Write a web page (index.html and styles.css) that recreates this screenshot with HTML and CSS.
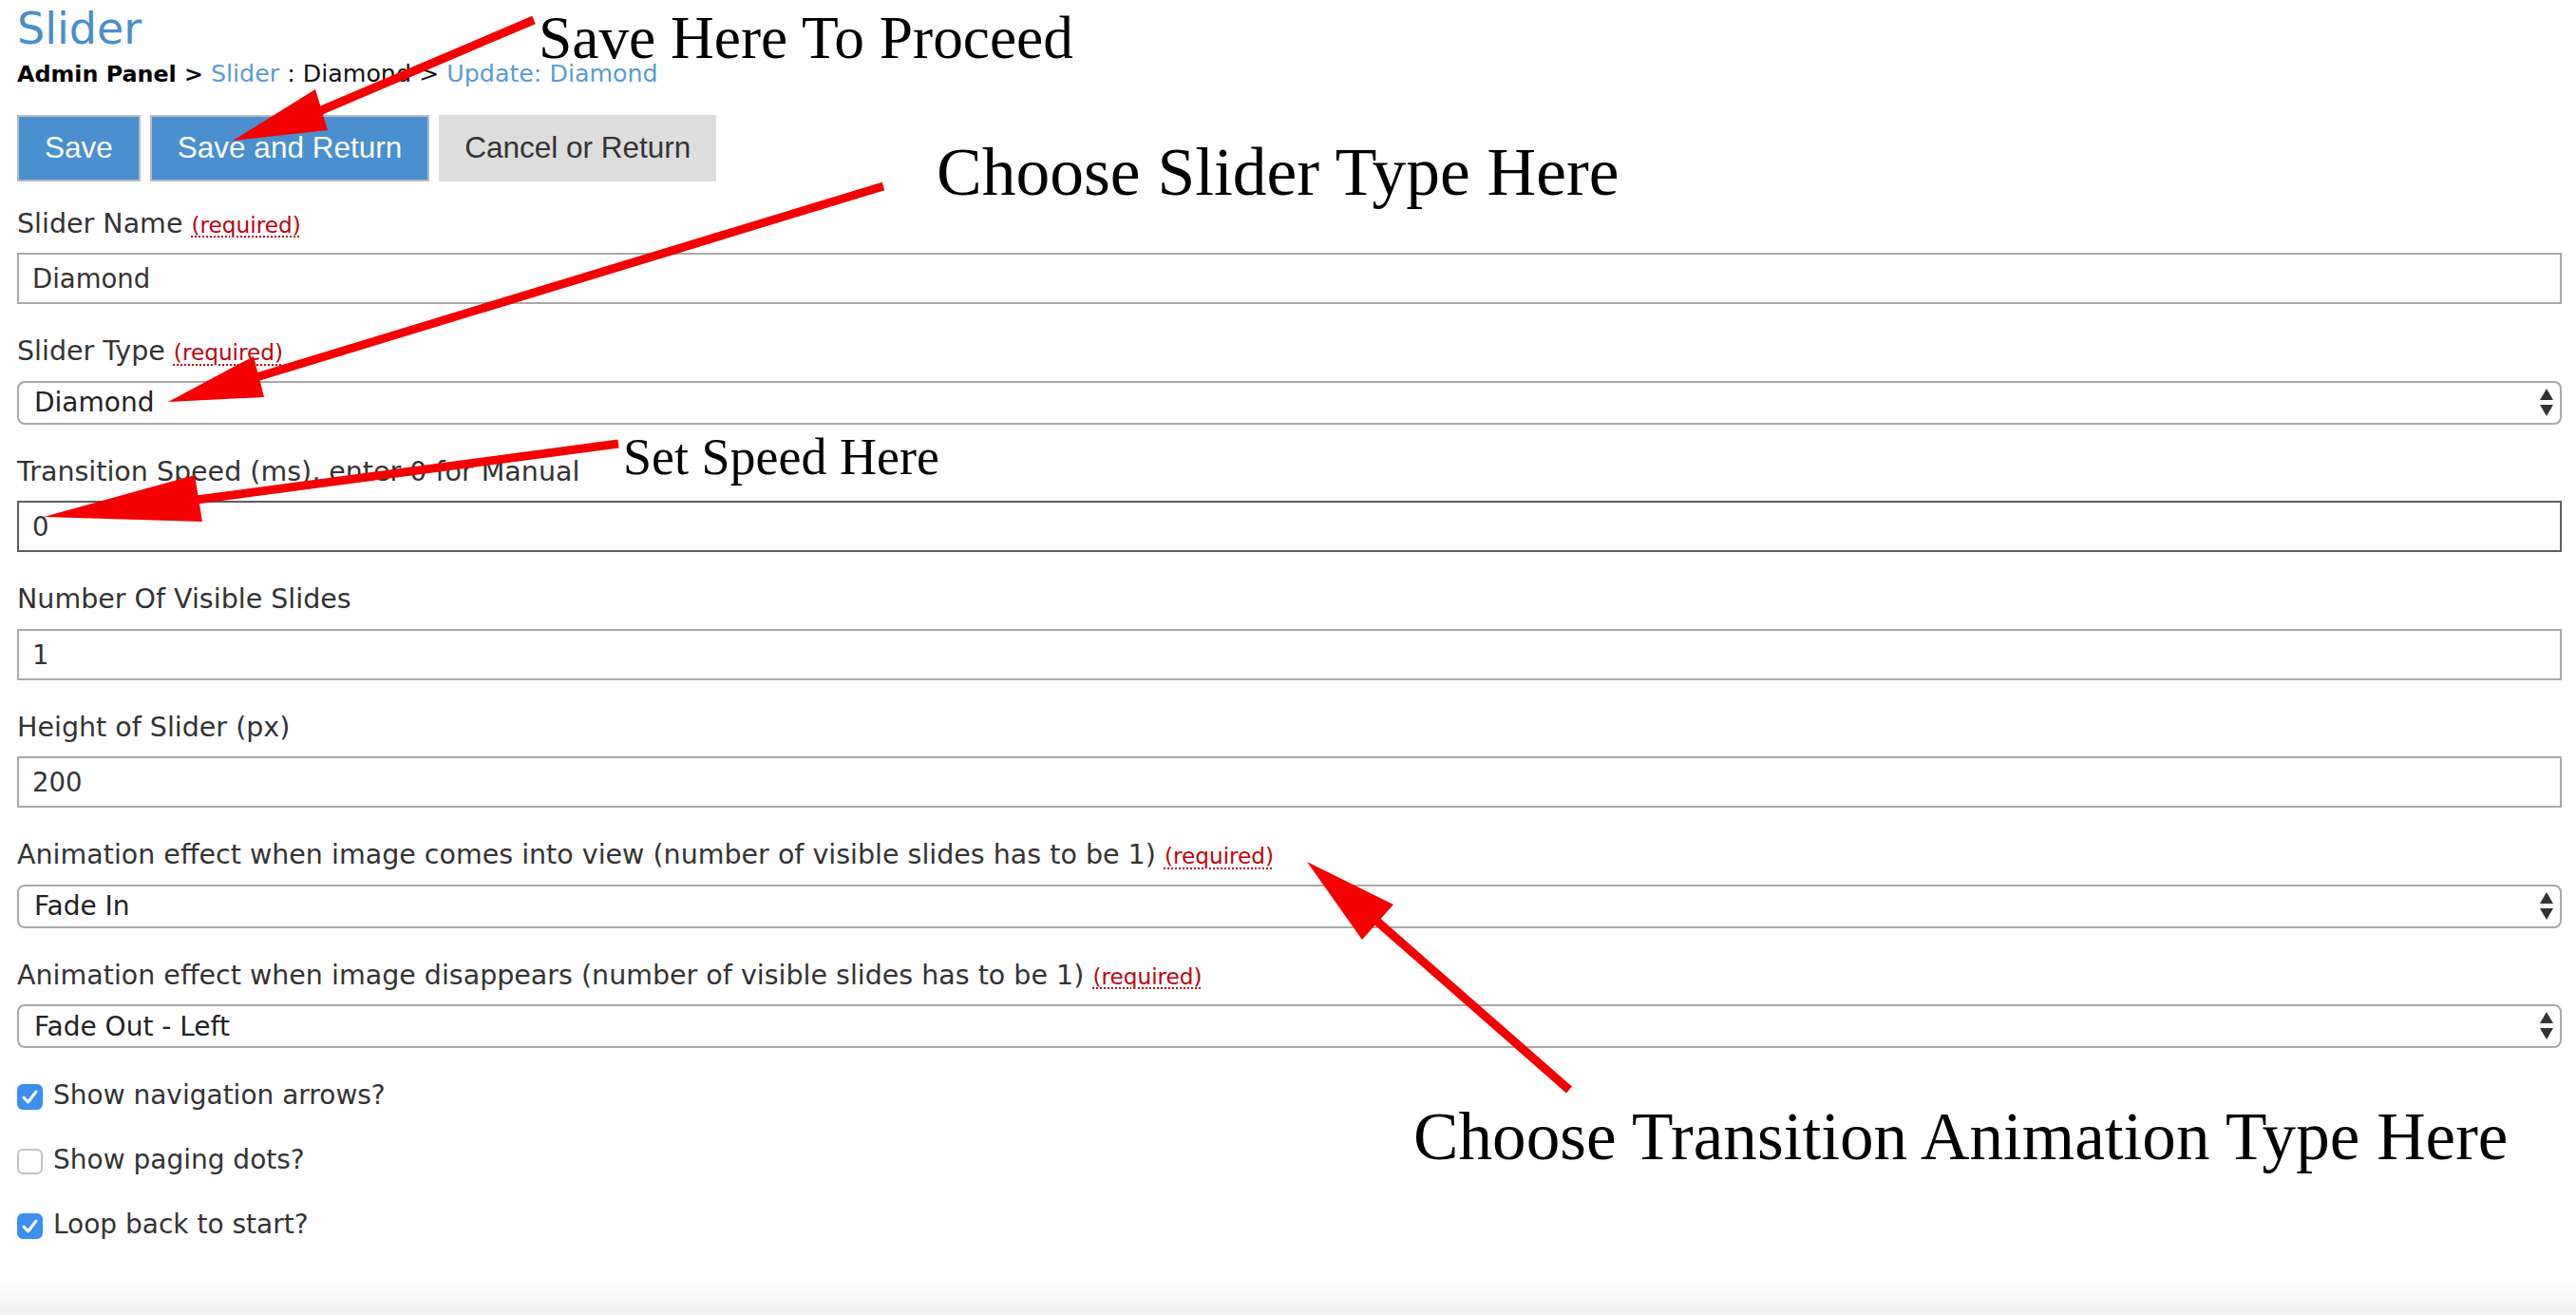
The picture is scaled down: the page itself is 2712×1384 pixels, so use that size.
FILE: index.html
```html
<!DOCTYPE html>
<html lang="en">
<head>
<meta charset="utf-8">
<title>Slider - Update: Diamond</title>
<link rel="stylesheet" href="styles.css">
</head>
<body>
<div class="page">
  <h1 class="title">Slider</h1>
  <div class="crumbs"><b>Admin Panel &gt;</b> <a class="crumb-link">Slider</a> : Diamond &gt; <a class="crumb-link">Update: Diamond</a></div>

  <div class="actions">
    <button class="btn btn-primary" type="button">Save</button>
    <button class="btn btn-primary" type="button">Save and Return</button>
    <button class="btn btn-default" type="button">Cancel or Return</button>
  </div>

  <form class="form">
    <div class="field field-first">
      <label class="label">Slider Name <abbr class="req" title="required">(required)</abbr></label>
      <input class="text" type="text" value="Diamond">
    </div>

    <div class="field">
      <label class="label">Slider Type <abbr class="req" title="required">(required)</abbr></label>
      <div class="select-wrap">
        <select class="select"><option>Diamond</option></select>
        <svg class="select-arrows" width="14" height="30" viewBox="0 0 14 30"><polygon points="7,0 14,12 0,12"/><polygon points="0,17 14,17 7,29"/></svg>
      </div>
    </div>

    <div class="field">
      <label class="label">Transition Speed (ms), enter 0 for Manual</label>
      <input class="text text-focus" type="text" value="0">
    </div>

    <div class="field">
      <label class="label">Number Of Visible Slides</label>
      <input class="text" type="text" value="1">
    </div>

    <div class="field">
      <label class="label">Height of Slider (px)</label>
      <input class="text" type="text" value="200">
    </div>

    <div class="field">
      <label class="label">Animation effect when image comes into view (number of visible slides has to be 1) <abbr class="req" title="required">(required)</abbr></label>
      <div class="select-wrap">
        <select class="select"><option>Fade In</option></select>
        <svg class="select-arrows" width="14" height="30" viewBox="0 0 14 30"><polygon points="7,0 14,12 0,12"/><polygon points="0,17 14,17 7,29"/></svg>
      </div>
    </div>

    <div class="field">
      <label class="label">Animation effect when image disappears (number of visible slides has to be 1) <abbr class="req" title="required">(required)</abbr></label>
      <div class="select-wrap">
        <select class="select"><option>Fade Out - Left</option></select>
        <svg class="select-arrows" width="14" height="30" viewBox="0 0 14 30"><polygon points="7,0 14,12 0,12"/><polygon points="0,17 14,17 7,29"/></svg>
      </div>
    </div>

    <div class="checks">
      <label class="check">
        <span class="box box-on"><svg width="27" height="27" viewBox="0 0 27 27"><path d="M7 14 L11.5 19 L20 8" fill="none" stroke="#fff" stroke-width="3" stroke-linecap="round" stroke-linejoin="round"/></svg></span>
        <span class="check-text">Show navigation arrows?</span>
      </label>
      <label class="check">
        <span class="box"></span>
        <span class="check-text">Show paging dots?</span>
      </label>
      <label class="check">
        <span class="box box-on"><svg width="27" height="27" viewBox="0 0 27 27"><path d="M7 14 L11.5 19 L20 8" fill="none" stroke="#fff" stroke-width="3" stroke-linecap="round" stroke-linejoin="round"/></svg></span>
        <span class="check-text">Loop back to start?</span>
      </label>
    </div>
  </form>

  <div class="footer"></div>

  <div class="note note-save">Save Here To Proceed</div>
  <div class="note note-type">Choose Slider Type Here</div>
  <div class="note note-speed">Set Speed Here</div>
  <div class="note note-anim">Choose Transition Animation Type Here</div>

  <svg class="arrows" width="2712" height="1384" viewBox="0 0 2712 1384">
    <g stroke="#f40000" stroke-width="9" fill="none">
      <line x1="562" y1="21" x2="336" y2="117"/>
      <line x1="930" y1="196" x2="270" y2="397"/>
      <line x1="651" y1="467" x2="207" y2="526"/>
      <line x1="1652" y1="1147" x2="1449" y2="969"/>
    </g>
    <g fill="#f40000">
      <polygon points="245,148 332,94 345,137"/>
      <polygon points="177,423 267,375 278,418"/>
      <polygon points="46,544 205,500 213,549"/>
      <polygon points="1376,907 1467,952 1434,989"/>
    </g>
  </svg>
</div>
</body>
</html>
```

FILE: styles.css
```css
html, body {
  margin: 0;
  padding: 0;
  background: #ffffff;
  overflow: hidden;
}

.page {
  position: relative;
  width: 2712px;
  height: 1384px;
  box-sizing: border-box;
  padding: 0 15px 0 18px;
  font-family: "DejaVu Sans", Verdana, sans-serif;
  color: #333333;
}

.title {
  margin: 0;
  padding-top: 4px;
  font-size: 46px;
  line-height: 52px;
  font-weight: normal;
  color: #4a8ecb;
}

.crumbs {
  margin-top: 9px;
  font-size: 25.3px;
  line-height: 26px;
  color: #111111;
}

.crumbs b {
  font-size: 23.8px;
  font-weight: bold;
  color: #000000;
}

.crumb-link {
  color: #5b9bd5;
  text-decoration: none;
}

.actions {
  display: flex;
  gap: 10px;
  margin-top: 30px;
}

.btn {
  height: 70px;
  box-sizing: border-box;
  padding: 0 27px;
  margin: 0;
  border: 2px solid #b4bcc4;
  border-radius: 0;
  font-family: "Liberation Sans", Arial, sans-serif;
  font-size: 31.5px;
  line-height: 1;
}

.btn-primary {
  background: #4a8fcf;
  color: #ffffff;
}

.btn-default {
  background: #dddddd;
  border-color: #dddddd;
  color: #333333;
  padding: 0 25px;
}

.form {
  margin: 0;
}

.label {
  display: block;
  margin: 33px 0 13.5px;
  font-size: 28.5px;
  line-height: 34px;
  color: #333333;
}

.field-first .label {
  margin-top: 27.5px;
}

.req {
  font-size: 23.2px;
  line-height: 1;
  color: #c0000c;
  text-decoration: underline dotted #c0000c;
  text-underline-offset: 4px;
  text-decoration-thickness: 2px;
}

.text {
  display: block;
  width: 100%;
  height: 54px;
  box-sizing: border-box;
  margin: 0;
  padding: 0 14px;
  border: 2px solid #a8a8a8;
  border-radius: 0;
  background: #ffffff;
  font-family: "DejaVu Sans", Verdana, sans-serif;
  font-size: 27.5px;
  color: #333333;
  outline: none;
}

.text-focus {
  border-color: #5e5e5e;
}

.select-wrap {
  position: relative;
}

.select {
  display: block;
  width: 100%;
  height: 46px;
  box-sizing: border-box;
  margin: 0;
  padding: 0 40px 0 16px;
  border: 2px solid #a8a8a8;
  border-radius: 8px;
  background: #ffffff;
  -webkit-appearance: none;
  appearance: none;
  font-family: "DejaVu Sans", Verdana, sans-serif;
  font-size: 28px;
  color: #222222;
  outline: none;
}

.select-arrows {
  position: absolute;
  right: 9px;
  top: 8px;
  fill: #333333;
}

.checks {
  margin-top: 32.5px;
}

.check {
  display: flex;
  align-items: center;
  height: 34px;
  margin-top: 34px;
}

.checks .check:first-child {
  margin-top: 0;
}

.box {
  display: block;
  width: 27px;
  height: 27px;
  box-sizing: border-box;
  margin-top: 4px;
  border: 2px solid #c4c4c4;
  border-radius: 6px;
  background: #ffffff;
}

.box svg {
  display: block;
  margin: -2px;
}

.box-on {
  background: #3a8ff0;
  border-color: #3a8ff0;
}

.check-text {
  margin-left: 11px;
  font-size: 28px;
  line-height: 34px;
  color: #333333;
}

.footer {
  margin-top: 36px;
  height: 42px;
  margin-left: -18px;
  margin-right: -15px;
  background: linear-gradient(#ffffff, #f1f1f1);
}

/* Annotation overlay */
.note {
  position: absolute;
  font-family: "Liberation Serif", "Times New Roman", serif;
  line-height: 0.75;
  white-space: nowrap;
  color: #000000;
}

.note-save {
  left: 567px;
  top: 17px;
  font-size: 63.4px;
}

.note-type {
  left: 986px;
  top: 154px;
  font-size: 71.5px;
}

.note-speed {
  left: 656px;
  top: 461px;
  font-size: 54px;
}

.note-anim {
  left: 1488px;
  top: 1170px;
  font-size: 71.2px;
}

.arrows {
  position: absolute;
  left: 0;
  top: 0;
  pointer-events: none;
}
```
